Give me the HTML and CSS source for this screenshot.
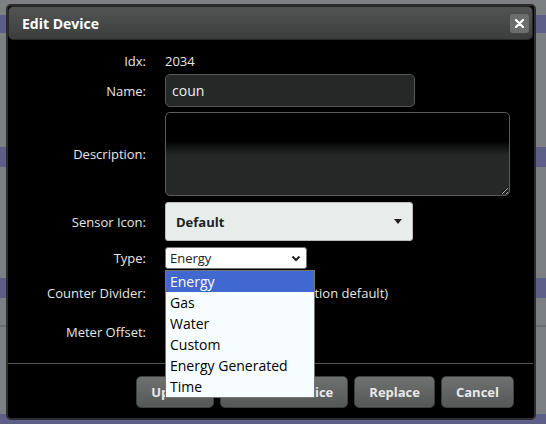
FILE: index.html
```html
<!DOCTYPE html>
<html lang="en">

<head>
    <meta charset="UTF-8">
    <meta name="viewport" content="width=device-width, initial-scale=1.0">
    <title>Edit Device</title>
    <link rel="stylesheet" href="styles.css">
</head>

<body>
    <!-- the greyed-out page behind the modal -->
    <div class="backdrop">
        <div class="band band-grey" style="height: 15px"></div>
        <div class="band band-purple" style="height: 18px"></div>
        <div class="band band-grey" style="height: 114px"></div>
        <div class="band band-purple" style="height: 20px"></div>
        <div class="band band-grey" style="height: 111px"></div>
        <div class="band band-purple" style="height: 20px"></div>
        <div class="band band-grey" style="height: 27px"></div>
        <div class="band band-line"></div>
        <div class="band band-grey" style="height: 87px"></div>
        <div class="band band-purple" style="height: 11px"></div>
    </div>

    <div class="dialog">
        <div class="titlebar">
            <span class="title">Edit Device</span>
            <button class="close" type="button" title="Close">
                <svg width="9" height="9" viewBox="0 0 9 9">
                    <path d="M1 1 L8 8 M8 1 L1 8" stroke="#fff" stroke-width="2.2" stroke-linecap="round" />
                </svg>
            </button>
        </div>

        <form class="content" id="editForm">
            <div class="row row-idx">
                <label>Idx:</label>
                <span class="value">2034</span>
            </div>

            <div class="row row-name">
                <label for="devName">Name:</label>
                <input type="text" id="devName" class="text-input name-input" value="coun">
            </div>

            <div class="row row-desc">
                <label for="devDesc">Description:</label>
                <textarea id="devDesc" class="desc-input"></textarea>
            </div>

            <div class="row row-icon">
                <label>Sensor Icon:</label>
                <div class="icon-select">
                    <span>Default</span>
                    <span class="caret"></span>
                </div>
            </div>

            <div class="row row-type">
                <label>Type:</label>
                <div class="type-select">
                    <span>Energy</span>
                    <svg width="10" height="7" viewBox="0 0 10 7">
                        <path d="M1.5 1.5 L5 5 L8.5 1.5" fill="none" stroke="#222" stroke-width="2" />
                    </svg>
                </div>
            </div>

            <div class="row row-divider">
                <label for="divider">Counter Divider:</label>
                <input type="text" id="divider" class="text-input small-input" value="0">
                <span class="hint">(0 = use application default)</span>
            </div>

            <div class="row row-offset">
                <label for="offset">Meter Offset:</label>
                <input type="text" id="offset" class="text-input small-input" value="0">
            </div>
        </form>

        <div class="buttonpane">
            <button type="button" class="btn">Update</button>
            <button type="button" class="btn">Remove Device</button>
            <button type="button" class="btn">Replace</button>
            <button type="button" class="btn">Cancel</button>
        </div>

        <!-- open list of the Type select -->
        <ul class="type-list">
            <li class="selected">Energy</li>
            <li>Gas</li>
            <li>Water</li>
            <li>Custom</li>
            <li>Energy Generated</li>
            <li>Time</li>
        </ul>
    </div>
</body>

</html>
```

FILE: styles.css
```css
* {
    box-sizing: border-box;
    margin: 0;
    padding: 0;
    font-family: 'Open Sans', 'Noto Sans', sans-serif;
}

body {
    width: 546px;
    height: 424px;
    overflow: hidden;
    position: relative;
    background-color: #7c8082;
}

.band {
    width: 100%;
}

.band-grey {
    background-color: #7c8082;
}

.band-purple {
    background-color: #5d5f88;
}

.band-line {
    height: 2px;
    background-color: #6a6e70;
}

.dialog {
    position: absolute;
    left: 6px;
    top: 4px;
    width: 530px;
    height: 416px;
    background-color: #000;
    border: 2px solid #2c2d2d;
    border-radius: 5px;
}

.titlebar {
    height: 34px;
    margin-right: 1px;
    display: flex;
    align-items: center;
    justify-content: space-between;
    padding: 0 3px 0 13px;
    background: linear-gradient(to bottom, #525454, #3c3e3e);
    border: 1px solid #262727;
    border-radius: 5px;
}

.title {
    color: #fff;
    font-size: 14px;
    font-weight: 700;
}

.close {
    width: 19px;
    height: 19px;
    display: flex;
    align-items: center;
    justify-content: center;
    background-color: #6c6e6e;
    border: none;
    border-radius: 3px;
}

.content {
    padding-top: 10px;
}

.row {
    display: flex;
    align-items: center;
}

.row label {
    width: 138px;
    margin-right: 19px;
    text-align: right;
    color: #e6e6e6;
    font-size: 13px;
}

.row-idx {
    height: 22px;
    margin-bottom: 2px;
}

.row-name {
    margin-bottom: 5px;
}

.row-desc {
    margin-bottom: 6px;
}

.row-icon {
    margin-bottom: 6px;
}

.row-type {
    height: 22px;
    margin-bottom: 6px;
}

.row-divider {
    height: 36px;
    margin-bottom: 5px;
}

.row-offset {
    height: 32px;
}

.value {
    color: #e6e6e6;
    font-size: 13px;
}

.text-input {
    height: 33px;
    background-color: #262828;
    border: 1px solid #575959;
    border-radius: 5px;
    color: #eee;
    font-size: 14px;
    padding: 0 6px;
    outline: none;
}

.name-input {
    width: 250px;
}

.small-input {
    width: 50px;
    height: 30px;
}

.desc-input {
    width: 345px;
    height: 84px;
    background: linear-gradient(to bottom, #000 0, #000 28px, #262828 42px);
    border: 1px solid #5a5c5c;
    border-radius: 5px;
    color: #eee;
    outline: none;
}

.icon-select {
    width: 248px;
    height: 39px;
    display: flex;
    align-items: center;
    justify-content: space-between;
    padding: 0 10px 0 10px;
    background-color: #e8eceb;
    border: 1px solid #b9bdbc;
    border-radius: 3px;
    color: #222;
    font-size: 13px;
    font-weight: 700;
}

.caret {
    width: 0;
    height: 0;
    border-left: 4px solid transparent;
    border-right: 4px solid transparent;
    border-top: 5px solid #222;
}

.type-select {
    width: 142px;
    height: 22px;
    display: flex;
    align-items: center;
    justify-content: space-between;
    padding: 0 5px 0 4px;
    background-color: #fff;
    border: 1px solid #767676;
    border-radius: 3px;
    color: #222;
    font-size: 13px;
}

.hint {
    margin-left: 6px;
    color: #e6e6e6;
    font-size: 13px;
}

.buttonpane {
    margin-top: 15px;
    margin-right: 1px;
    border-top: 1px solid #555;
    padding: 12px 19px 0 0;
    display: flex;
    justify-content: flex-end;
    gap: 6px;
}

.btn {
    height: 32px;
    padding: 0 14px;
    background: linear-gradient(to bottom, #6f7171, #565858);
    border: 1px solid #3e4040;
    border-radius: 5px;
    color: #e8e8e8;
    font-size: 13px;
    font-weight: 700;
}

.type-list {
    position: absolute;
    left: 157px;
    top: 264px;
    width: 150px;
    list-style: none;
    background-color: #f7fdfe;
    border: 1px solid #767676;
}

.type-list li {
    height: 21px;
    line-height: 21px;
    padding-left: 4px;
    color: #000;
    font-size: 14px;
}

.type-list li.selected {
    background-color: #4168cf;
    color: #fff;
}
```
